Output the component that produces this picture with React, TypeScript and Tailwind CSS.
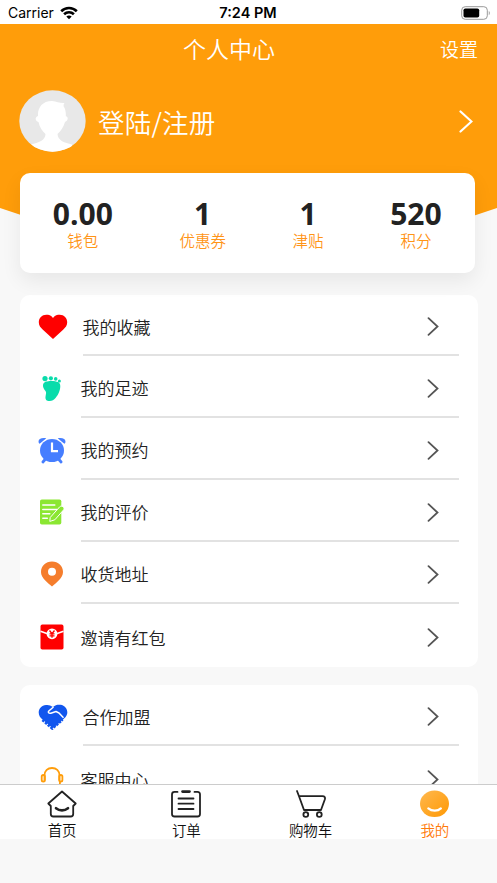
import React from 'react';

const stats = [
  { value: '0.00', label: '钱包' },
  { value: '1', label: '优惠券' },
  { value: '1', label: '津贴' },
  { value: '520', label: '积分' },
];

const HeartIcon = () => (
  <svg width="30" height="26" viewBox="0 0 30 26" fill="#ff0000">
    <path d="M15 4C17 1.200 19.300.800 21.700.800c4.300 0 7.500 3.200 7.500 7.400 0 3.300-1.700 5.300-4.100 7.500L15 25 4.900 15.700C2.500 13.500.800 11.500.800 8.200.800 4 4 .800 8.300.800 10.700.800 13 1.200 15 4Z" />
  </svg>
);

const FootIcon = () => (
  <svg width="27" height="27" viewBox="0 0 27 27" fill="#09dcab">
    <circle cx="7" cy="3.600" r="2.600" />
    <circle cx="12.900" cy="3.300" r="2.100" />
    <circle cx="17.700" cy="3.900" r="1.800" />
    <circle cx="21.400" cy="6" r="1.500" />
    <path d="M7.900 6.600c3.200-1.100 9.500-.9 12.200.5 3.100 1.500 2.500 6.200.9 10.200-1.600 3.600-4.600 8.900-9.400 8.800-3.200 0-4.400-1.900-4.100-4.400.3-2.300 1.200-4 0-5.600C5.300 13.800 3 8.700 7.900 6.600Z" />
  </svg>
);

const AlarmIcon = () => (
  <svg width="28" height="27" viewBox="0 0 28 27">
    <ellipse cx="14" cy="13.500" rx="12" ry="11.500" fill="#467eff" />
    <path d="M1.300 6.800C-1 3 2 .300 8.300 1.300L2.600 5.900ZM26.700 6.800C29 3 26 .300 19.700 1.300l5.700 4.600Z" fill="#467eff" />
    <path d="m7.500 22-2.600 3M20.500 22l2.600 3" stroke="#467eff" strokeWidth="2.800" strokeLinecap="round" />
    <path d="M14 5.500v8.700h6" fill="none" stroke="#fff" strokeWidth="2.200" />
  </svg>
);

const ReviewIcon = () => (
  <svg width="27" height="26" viewBox="0 0 27 26">
    <rect x="2" y=".500" width="21.300" height="25" rx="1.800" fill="#8be732" />
    <path d="M4.800 6h12M4.800 10.600h14M4.800 14.800h7M4.800 19.300h4.500" stroke="#fff" strokeWidth="1.500" strokeLinecap="round" />
    <path d="m12.200 18.500 9.500-10.700c1.900-1.900 5.500.8 4 3l-8.900 10-5 1.600Z" fill="#8be732" stroke="#fff" strokeWidth="1" strokeLinejoin="round" />
  </svg>
);

const PinIcon = () => (
  <svg width="27" height="26" viewBox="0 0 27 26" fill="#f57d2c">
    <path fillRule="evenodd" d="M14 .6c6.200 0 11 4.500 11 10.300 0 6.200-6.600 10.200-11 14.700C9.600 21.100 3 17.100 3 10.900 3 5.100 7.800.6 14 .6Zm0 6.100a4 4 0 1 0 0 8 4 4 0 0 0 0-8Z" />
  </svg>
);

const RedPacketIcon = () => (
  <svg width="27" height="26" viewBox="0 0 27 26">
    <rect x="2.500" y=".600" width="23" height="25" rx="1.800" fill="#ff0000" />
    <path d="M2.500 7.200 9.500 9.800M25.500 7.200l-7 2.600" stroke="#fff" strokeWidth="1.500" />
    <circle cx="14" cy="9.800" r="5.400" fill="#fff" />
    <path d="m11.500 6.500 2.500 3.200 2.500-3.200M14 9.500v4.300M11.500 9.900h5M11.500 11.900h5" fill="none" stroke="#ff0000" strokeWidth="1.300" />
  </svg>
);

const HandshakeIcon = () => (
  <svg width="30" height="26" viewBox="0 0 30 26">
    <path d="M8 1C10.500.600 12.500 1.400 15 3 17.500.800 20 .400 22.500.800c5 .700 7.600 5.400 6.600 9.300-.7 2.600-2.400 4-4 5.400L17 22.500 14.500 24 4.500 15.500C2.200 13.500.700 11.300.700 8.400.700 4.600 3.600 1.500 8 1Z" fill="#1156ee" />
    <path d="m4.500 15.800 9.800 8.500 10.200-8.800" fill="none" stroke="#1156ee" strokeWidth="3" strokeDasharray="2.500 1.100" />
    <path d="m15.500 3-4.700 4c-1.300 1.400.2 2.700 2 2.200l5.200-1.700 3 1.500 4.500 4.800" fill="none" stroke="#fff" strokeWidth="1.500" strokeLinejoin="round" />
  </svg>
);

const ServiceIcon = () => (
  <svg width="27" height="26" viewBox="0 0 27 26" fill="none" stroke="#ff9d0a" strokeWidth="1.800">
    <path d="M6.500 14.500V9.600C6.500 4.800 9.800 2 14 2s7.500 2.800 7.500 7.600v4.900" />
    <rect x="3.700" y="9" width="3.200" height="6.500" rx="1.600" />
    <rect x="21.200" y="9" width="3.200" height="6.500" rx="1.600" />
    <path d="M22 16c0 5-3 7-7 7" />
  </svg>
);

const mainMenu = [
  { label: '我的收藏', icon: <HeartIcon />, wide: true },
  { label: '我的足迹', icon: <FootIcon /> },
  { label: '我的预约', icon: <AlarmIcon /> },
  { label: '我的评价', icon: <ReviewIcon /> },
  { label: '收货地址', icon: <PinIcon /> },
  { label: '邀请有红包', icon: <RedPacketIcon /> },
];

const moreMenu = [
  { label: '合作加盟', icon: <HandshakeIcon />, wide: true },
  { label: '客服中心', icon: <ServiceIcon /> },
];

const HomeIcon = () => (
  <svg width="30" height="28" viewBox="0 0 30 28" fill="none" stroke="#222" strokeWidth="1.800" strokeLinejoin="round" strokeLinecap="round">
    <path d="M15 1.500 1.300 13.500 3.800 16v8c0 1.700.8 2.500 2.500 2.500h17.400c1.700 0 2.500-.8 2.500-2.500v-8l2.500-2.500Z" />
    <path d="M9 18.200c3.500 2.900 8.500 2.900 12 0" strokeWidth="2.600" />
  </svg>
);

const OrderIcon = () => (
  <svg width="30" height="28" viewBox="0 0 30 28" fill="none" stroke="#222" strokeWidth="1.800" strokeLinecap="round">
    <path d="M6.500 1.900H3.500C1.800 1.900 1 2.700 1 4.400V24c0 1.700.8 2.500 2.500 2.500h23c1.700 0 2.500-.8 2.500-2.500V4.400c0-1.700-.8-2.500-2.500-2.500h-3" />
    <path d="M11.500 1.600h7" strokeWidth="2.600" />
    <path d="M7.500 8.500h15M7.500 13.700h15M7.500 19h15" />
  </svg>
);

const CartIcon = () => (
  <svg width="30" height="28" viewBox="0 0 30 28" fill="none" stroke="#222" strokeWidth="1.800" strokeLinejoin="round" strokeLinecap="round">
    <path d="m1 1 2 5.200L8 20h17l3.800-10.500c.7-2.300-.2-3.300-2.300-3.300H3" />
    <circle cx="9.800" cy="24.500" r="2.400" />
    <circle cx="23.300" cy="24.500" r="2.400" />
  </svg>
);

const MineIcon = () => (
  <svg width="30" height="28" viewBox="0 0 30 28">
    <defs>
      <linearGradient id="mine" x1="0" y1="0" x2="1" y2="1">
        <stop offset="0" stopColor="#ffb84f" />
        <stop offset="1" stopColor="#ff9903" />
      </linearGradient>
    </defs>
    <ellipse cx="14.500" cy="13.800" rx="14.500" ry="13.200" fill="url(#mine)" />
    <path d="M8.300 18.400c3.600 3 9.400 3 12.600 0" fill="none" stroke="#fff" strokeWidth="2.200" strokeLinecap="round" />
  </svg>
);

const tabs = [
  { label: '首页', icon: <HomeIcon /> },
  { label: '订单', icon: <OrderIcon /> },
  { label: '购物车', icon: <CartIcon /> },
  { label: '我的', icon: <MineIcon />, active: true },
];

const StatusBar = () => (
  <div className="grid h-6 shrink-0 grid-cols-3 items-center bg-white pt-px pl-2 pr-1.5 font-['Inter',sans-serif] text-[14px] text-black">
    <div className="flex items-center gap-1.5">
      <span>Carrier</span>
      <svg width="18" height="14" viewBox="0 0 18 14" fill="none" stroke="#000" strokeWidth="2.600">
        <path d="M1.200 5.200c4.400-4.300 11.200-4.300 15.600 0M4.100 8.300c2.800-2.700 7-2.700 9.800 0" />
        <path d="M9 13.200 6.300 10.500c1.600-1.400 3.800-1.400 5.400 0Z" fill="#000" stroke="none" />
      </svg>
    </div>
    <span className="pr-[3px] text-center text-[14.500px] font-semibold">7:24 PM</span>
    <svg className="justify-self-end" width="30" height="14" viewBox="0 0 30 14">
      <rect x=".700" y=".700" width="25.600" height="12.600" rx="3.500" fill="none" stroke="#999" />
      <rect x="2.500" y="2.500" width="15.700" height="9" rx="1.800" />
      <path d="M27.800 5v4.200c1.200-.7 1.200-3.500 0-4.200Z" fill="#888" />
    </svg>
  </div>
);

const Avatar = () => (
  <svg width="67" height="62" viewBox="0 0 67 62">
    <defs>
      <clipPath id="avatar">
        <ellipse cx="33.500" cy="31" rx="33.200" ry="30.700" />
      </clipPath>
    </defs>
    <g clipPath="url(#avatar)">
      <rect width="67" height="62" fill="#e8e8e8" />
      <path
        d="M19 26c-.5-8 4-15 14-15 5 .500 8 2.500 12.500 2-1 1.500-1 2-.8 3.500 1.800 2.500 2.300 6 2.100 9.800 3 .7 2.200 4.700-.8 5.700-1.500 5.500-4.500 9-7.500 12 .5 7 7 8.500 14.500 10.500v8H12v-8c7.500-2 14.500-4 14.500-10.500-3-3-6-6.500-7-12-3.500-1-3.800-5-.5-6Z"
        fill="#fff"
      />
    </g>
  </svg>
);

const Header = () => (
  <header className="h-[193px] shrink-0 bg-[#ff9d0a] text-white [clip-path:polygon(0_0,100%_0,100%_184px,calc(100%-27px)_100%,27px_100%,0_184px)]">
    <div className="flex h-[48px] items-center pl-[183px] pr-[19px]">
      <h1 className="text-[23px] font-[350] leading-none">个人中心</h1>
      <span className="ml-auto text-[19px] font-[350] leading-none">设置</span>
    </div>
    <div className="mt-[18px] flex items-center pl-[19px] pr-6">
      <Avatar />
      <span className="ml-3 flex-1 pt-0.5 text-[26.500px] font-[350] leading-none tracking-[0.2px]">登陆/注册</span>
      <svg width="14" height="23" viewBox="0 0 14 23" fill="none" stroke="#fff" strokeWidth="2.200" strokeLinecap="round">
        <path d="M1.500 1.500 12.500 11.500l-11 10" />
      </svg>
    </div>
  </header>
);

const MenuCard = ({ items }: { items: { label: string; icon: React.ReactNode; wide?: boolean }[] }) => (
  <div className="ml-[19.500px] mr-[19px] shrink-0 rounded-[10px] bg-white pl-[18px] pr-[19.500px]">
    {items.map((item, index) => (
      <div className="flex h-[62px] first:h-[61px] last:h-[63px]" key={item.label}>
        <div className={`flex shrink-0 items-center pt-0.5 ${item.wide ? 'w-[45px]' : 'w-[43px]'}`}>{item.icon}</div>
        <div className={`flex flex-1 items-center justify-between pt-1 pr-5 ${index < items.length - 1 ? 'border-b-2 border-[#e2e2e2]' : ''}`}>
          <span className="text-[17px] font-[350] text-[#222]">{item.label}</span>
          <svg width="12" height="19" viewBox="0 0 12 19" fill="none" stroke="#555" strokeWidth="1.800" strokeLinecap="round">
            <path d="m1.500 1.200 9 8.300-9 8.300" />
          </svg>
        </div>
      </div>
    ))}
  </div>
);

const App = () => {
  return (
    <div className="flex h-[883px] w-[497px] flex-col overflow-hidden bg-[#f8f8f8] font-['Noto_Sans_CJK_SC',sans-serif]">
      <StatusBar />
      <main className="flex h-[760px] shrink-0 flex-col overflow-hidden">
        <Header />
        <div className="relative -mt-[44.500px] ml-[19.500px] mr-[22px] flex h-[100px] shrink-0 justify-around rounded-[10px] bg-white pt-[26px] shadow-[0_8px_20px_rgba(0,0,0,0.07)]">
          {stats.map((stat) => (
            <div className="flex flex-col items-center" key={stat.label}>
              <span className="font-['Open_Sans',sans-serif] text-[30px] font-bold leading-[30px] text-[#222]">{stat.value}</span>
              <span className="mt-[3px] text-[15.500px] font-[350] leading-4 text-[#ff9416]">{stat.label}</span>
            </div>
          ))}
        </div>
        <div className="mt-[22.500px] flex flex-col gap-[18px]">
          <MenuCard items={mainMenu} />
          <MenuCard items={moreMenu} />
        </div>
      </main>
      <nav className="grid h-[55px] shrink-0 grid-cols-4 border-t border-[#ccc] bg-white">
        {tabs.map((tab) => (
          <div className="flex flex-col items-center pt-[5px]" key={tab.label}>
            {tab.icon}
            <span className={`mt-[3px] text-[14.500px] font-[350] leading-[18px] ${tab.active ? 'text-[#ff7a08]' : 'text-[#111]'}`}>{tab.label}</span>
          </div>
        ))}
      </nav>
    </div>
  );
};

export default App;
